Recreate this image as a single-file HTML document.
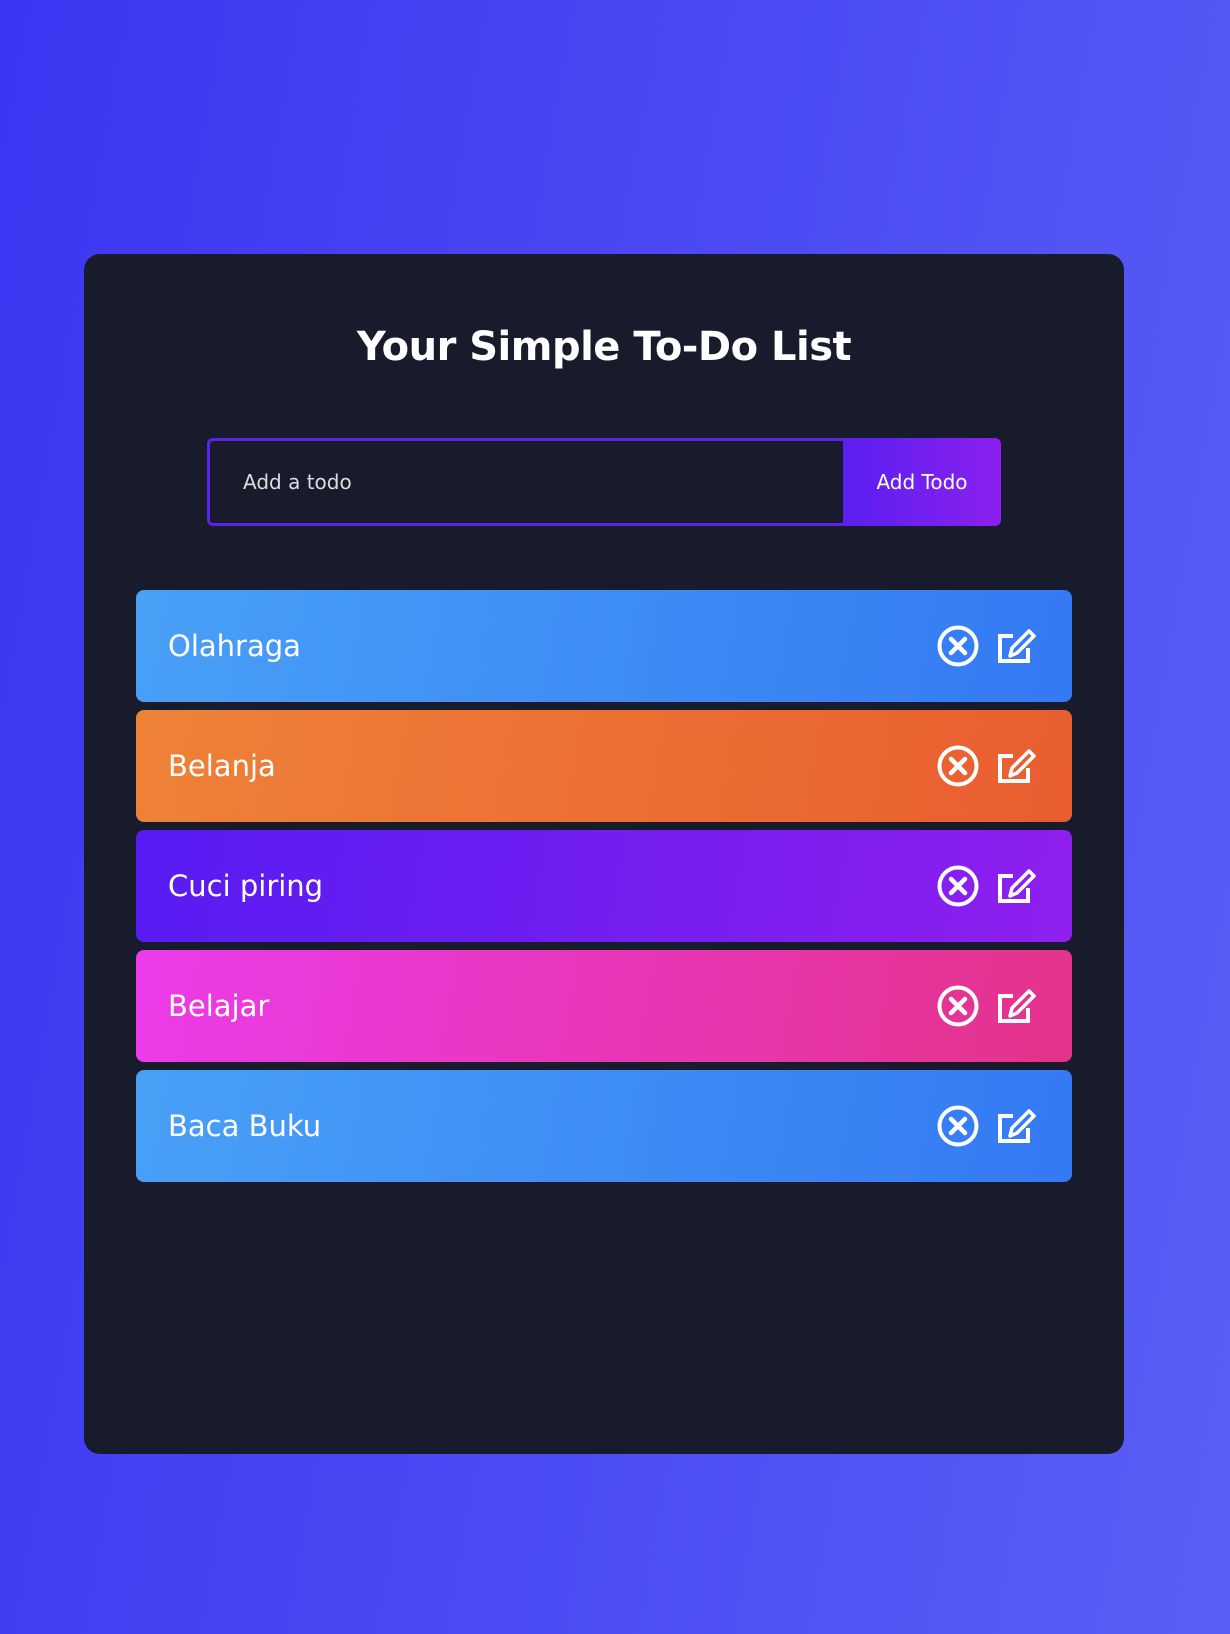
<!DOCTYPE html>
<html><head><style>
body{margin:0;width:1230px;height:1634px;background:linear-gradient(100deg,#3c35f2,#5a5ff5);font-family:"DejaVu Sans","Liberation Sans",sans-serif;position:relative;overflow:hidden}
.card{position:absolute;left:84px;top:254px;width:1040px;height:1200px;background:#181b2c;border-radius:16px}
h1{position:absolute;left:84px;width:1040px;top:324px;margin:0;text-align:center;color:#fff;font-size:40px;font-weight:bold;letter-spacing:-0.5px}
.inp{position:absolute;left:207px;top:438px;width:636px;height:88px;box-sizing:border-box;border:3px solid #5b23e6;border-right:none;border-radius:6px 0 0 6px;background:#181b2c;color:#ddd;font-size:20px;line-height:82px;padding-left:33px}
.btn{position:absolute;left:843px;top:438px;width:158px;height:88px;border-radius:0 6px 6px 0;background:linear-gradient(90deg,#5a1ff0,#8b20ef);color:#fff;font-size:20px;line-height:88px;text-align:center}
.item{position:absolute;left:136px;width:936px;height:112px;border-radius:8px;color:#fff;font-size:29px;line-height:112px;box-sizing:border-box;padding-left:32px}
.item svg{position:absolute;left:800px;top:33px}
</style></head><body>
<div class="card"></div>
<h1>Your Simple To-Do List</h1>
<div class="inp">Add a todo</div>
<div class="btn">Add Todo</div>
<div class="item" style="top:590px;background:linear-gradient(100deg,#49a0f6,#3479f4)">Olahraga</div>
<div class="item" style="top:710px;background:linear-gradient(100deg,#ee8237,#e95d30)">Belanja</div>
<div class="item" style="top:830px;background:linear-gradient(100deg,#561cf2,#8f1fef)">Cuci piring</div>
<div class="item" style="top:950px;background:linear-gradient(100deg,#ec3bea,#e33389)">Belajar</div>
<div class="item" style="top:1070px;background:linear-gradient(100deg,#49a0f6,#3479f4)">Baca Buku</div>
<script>
document.querySelectorAll('.item').forEach(function(e){e.insertAdjacentHTML('beforeend','<svg width="110" height="70" viewBox="0 0 110 70"><circle cx="22" cy="23" r="18.5" fill="none" stroke="#fff" stroke-width="4"/><path d="M15 16L29 30M29 16L15 30" stroke="#fff" stroke-width="4.5" stroke-linecap="round"/><path d="M77 13H64V38H92V25" fill="none" stroke="#fff" stroke-width="4"/><path d="M74 33L76 25L93 8L98 13L81 30Z" fill="none" stroke="#fff" stroke-width="3.5" stroke-linejoin="round"/></svg>')});
</script>
</body></html>
